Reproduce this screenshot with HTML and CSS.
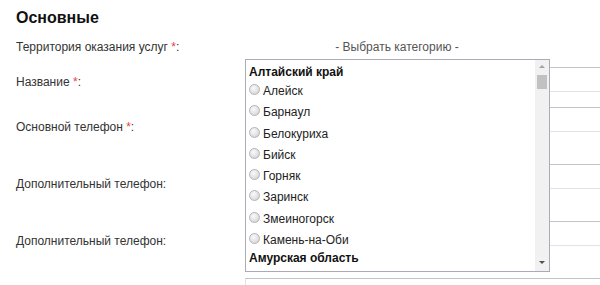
FILE: index.html
```html
<!DOCTYPE html>
<html lang="ru">
<head>
    <meta charset="UTF-8">
    <title>Основные</title>
    <link rel="stylesheet" href="styles.css">
</head>
<body>
    <div class="page">
        <h2 class="section-title">Основные</h2>

        <div class="form">
            <!-- Территория -->
            <div class="row row-territory">
                <label class="label">Территория оказания услуг <span class="req">*</span>:</label>
                <div class="field">
                    <div class="picker">- Выбрать категорию -</div>

                    <div class="dropdown">
                        <div class="dropdown-list">
                            <div class="group">Алтайский край</div>
                            <label class="item"><span class="radio"></span>Алейск</label>
                            <label class="item"><span class="radio"></span>Барнаул</label>
                            <label class="item"><span class="radio"></span>Белокуриха</label>
                            <label class="item"><span class="radio"></span>Бийск</label>
                            <label class="item"><span class="radio"></span>Горняк</label>
                            <label class="item"><span class="radio"></span>Заринск</label>
                            <label class="item"><span class="radio"></span>Змеиногорск</label>
                            <label class="item"><span class="radio"></span>Камень-на-Оби</label>
                            <div class="group group-next">Амурская область</div>
                        </div>
                        <div class="scrollbar">
                            <span class="arrow arrow-up"></span>
                            <span class="thumb"></span>
                            <span class="arrow arrow-down"></span>
                        </div>
                    </div>
                </div>
            </div>

            <div class="row row-first">
                <label class="label">Название <span class="req">*</span>:</label>
                <div class="field"><input type="text" class="input"></div>
            </div>

            <div class="row">
                <label class="label">Основной телефон <span class="req">*</span>:</label>
                <div class="field"><input type="text" class="input"></div>
            </div>

            <div class="row">
                <label class="label">Дополнительный телефон:</label>
                <div class="field"><input type="text" class="input"></div>
            </div>

            <div class="row">
                <label class="label">Дополнительный телефон:</label>
                <div class="field"><input type="text" class="input"></div>
            </div>

            <div class="row">
                <label class="label"></label>
                <div class="field"><input type="text" class="input"></div>
            </div>
        </div>
    </div>
</body>
</html>
```

FILE: styles.css
```css
html, body {
    margin: 0;
    overflow: hidden;
}

body {
    font-family: "Liberation Sans", Arial, sans-serif;
    font-size: 12px;
    color: #333;
    background-color: #fff;
}

.page {
    box-sizing: border-box;
    width: 600px;
    height: 285px;
    padding: 8px 0 0 16px;
    overflow: hidden;
}

.section-title {
    margin: 0 0 12px;
    font-size: 16px;
    line-height: 20px;
    font-weight: bold;
    color: #111;
}

.form {
    display: flex;
    flex-direction: column;
    gap: 30px;
}

.row {
    display: flex;
    align-items: flex-start;
}

.label {
    width: 229px;
    flex: none;
    line-height: 14px;
    padding-top: 13px;
}

.req {
    color: #e8413c;
}

.field {
    position: relative;
    flex: 1;
    min-width: 0;
}

.input {
    display: block;
    box-sizing: border-box;
    width: calc(100% + 20px);
    height: 25px;
    margin: 0;
    border: 1px solid #e3e3e3;
    border-top-color: #c4c4c4;
    background: #fff;
}

/* territory row */
.row-territory {
    height: 27px;
    margin-bottom: -30px;
}

.row-territory .label {
    padding-top: 0;
}

.row-first {
    margin-bottom: -15px;
}

.row-first .label {
    padding-top: 8px;
}

.picker {
    width: 304px;
    text-align: center;
    line-height: 14px;
    color: #555;
}

/* dropdown overlay */
.dropdown {
    position: absolute;
    top: 19px;
    left: 0;
    z-index: 2;
    box-sizing: border-box;
    width: 305px;
    height: 213px;
    display: flex;
    border: 1px solid #aaaab8;
    background: #fff;
    overflow: hidden;
}

.dropdown-list {
    flex: 1;
    padding: 4px 0 0 3px;
    color: #222;
}

.group {
    font-weight: bold;
    line-height: 17px;
    color: #111;
}

.group-next {
    line-height: 14px;
}

.item {
    display: flex;
    align-items: flex-start;
    gap: 3px;
    height: 21.3px;
    line-height: 21.3px;
}

.radio {
    flex: none;
    box-sizing: border-box;
    width: 11px;
    height: 11px;
    margin-top: 3px;
    border: 1px solid #b4b4b4;
    border-radius: 50%;
    background: radial-gradient(circle at 40% 35%, #fafafa 0%, #e2e2e2 55%, #cbcbcb 100%);
}

.scrollbar {
    flex: none;
    position: relative;
    width: 14px;
    background: #f1f1f1;
}

.thumb {
    position: absolute;
    top: 15px;
    left: 2px;
    width: 10px;
    height: 14px;
    background: #c1c1c1;
}

.arrow {
    position: absolute;
    left: 4px;
    width: 0;
    height: 0;
    border-left: 3px solid transparent;
    border-right: 3px solid transparent;
}

.arrow-up {
    top: 5px;
    border-bottom: 3px solid #a3a3a3;
}

.arrow-down {
    bottom: 7px;
    border-top: 3px solid #505050;
}
```
